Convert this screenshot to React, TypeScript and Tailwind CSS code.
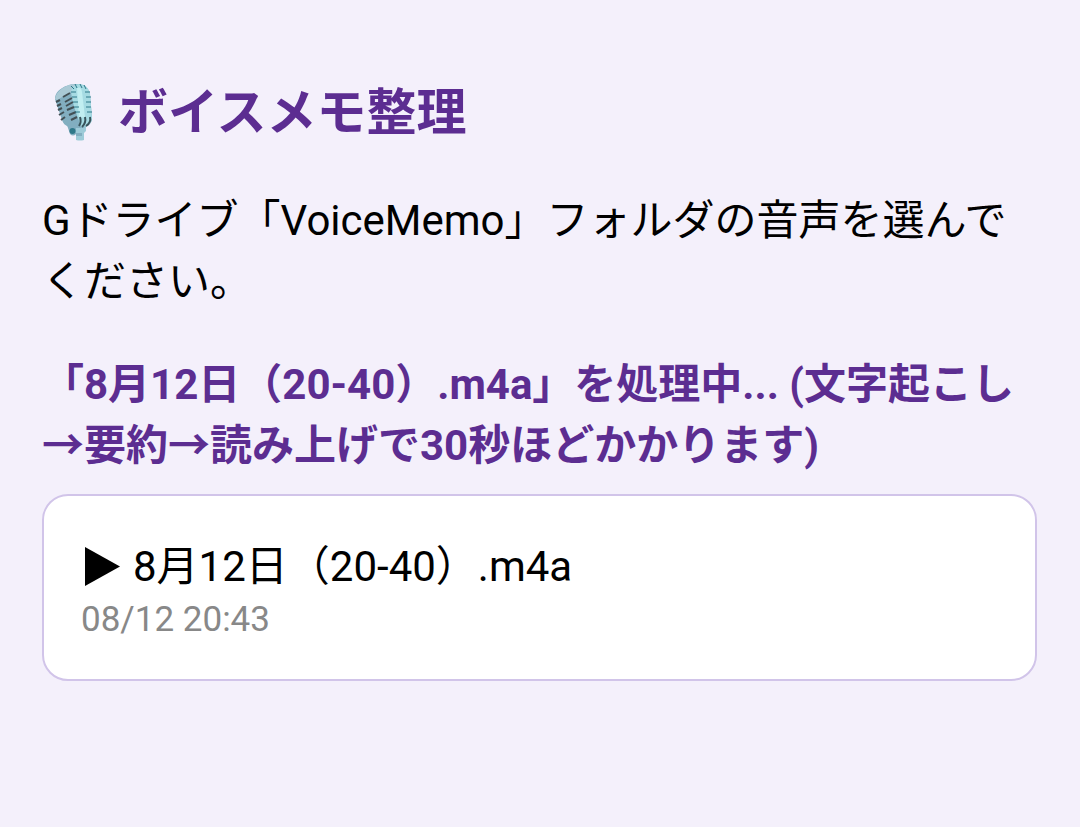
import React from 'react';

type Recording = {
  id: string;
  name: string;
  modified: string;
};

const RECORDINGS: Recording[] = [
  { id: 'rec-0812', name: '8月12日（20-40）.m4a', modified: '08/12 20:43' },
];

function MicIcon() {
  return (
    <svg viewBox="0 0 60 60" className="size-15 shrink-0" fill="none" aria-hidden="true">
      {/* stand */}
      <path d="M25 42 28 51q3 3 6 0l6-7z" fill="#82aec0" />
      <path d="M34 43h10v5l-2 2v7q-4 1-8 0z" fill="#9dcbd8" />
      <path d="M34 50h6v3h-6z" fill="#82aec0" />
      <circle cx="30.500" cy="48" r="3" fill="#2f7889" />
      {/* head */}
      <path d="M13 16C13 7 24 1 35 1c7 0 12 4 13 10l2 24c0 7-6 10-13 10-8 0-15-1-17-8z" fill="#82aec0" />
      <path d="M13 16C14 8 24 1 33 1l2 3-6 5-14 8z" fill="#a9c9d5" />
      <path d="M29 9c1-5 4-8 8-8 6 0 10 4 11 10l2 24c0 6-5 9-11 9-2-8-8-19-10-35z" fill="#a6dbe3" />
      <path d="M35 5q4-2 5 4l3 25-6 1z" fill="#c1eef1" />
      {/* grille */}
      <path
        d="m14 19 4-2m-3 6 4-2m-3 6 4-2m-3 7 5-3m-3 8 4-3M21 14l7-4m-5 9 7-4m-6 8 7-4m-6 8 7-3m-5 8 7-3m-5 8 6-3"
        stroke="#424f54"
        strokeWidth="2"
      />
      <path
        d="M29 9h5m-4 5h5m-4 5h5m-4 5h5m-4 5h5m5-20h5m-4 5h5m-5 5h5m-5 5h5m-4 5h5M29 3l3 3m1-5 2 4m3-4 2 4m2-3 2 4"
        stroke="#2f7889"
        strokeWidth="1"
      />
      <path d="M38 34c1 3 1 6-1 9m6-9c1 4 0 7-3 10m8-10c1 4-1 7-4 9" stroke="#39545c" strokeWidth="2" />
    </svg>
  );
}

function RecordingCard({ recording }: { recording: Recording }) {
  return (
    <button
      type="button"
      className="block w-full rounded-[26px] border-2 border-[#d1c4e9] bg-white px-[37px] pt-10 pb-[38px] text-left"
    >
      <span className="flex items-center text-[42px] leading-[62px] text-black">
        <svg viewBox="0 0 40 40" className="mr-3 size-10 shrink-0" aria-hidden="true">
          <path d="M4 0 39 19.500 4 39z" fill="currentColor" />
        </svg>
        {recording.name}
      </span>
      <span className="block text-[35px] leading-[43px] text-[#888888]">{recording.modified}</span>
    </button>
  );
}

export default function App() {
  return (
    <main className="min-h-screen bg-[#f4f0fb] pt-[76px] pr-[43px] pl-[42px] font-[Roboto,'Noto_Sans_CJK_JP',sans-serif] text-black">
      <h1 className="flex items-center gap-4 text-[50px] leading-[74px] font-bold text-[#5c2d91]">
        <MicIcon />
        ボイスメモ整理
      </h1>
      <p className="mt-10 text-[42px] leading-[61px]">
        Gドライブ「VoiceMemo」フォルダの音声を選んでください。
      </p>
      <p className="mt-[42px] text-[42px] leading-[61px] font-bold text-[#5c2d91]" role="status">
        「8月12日（20-40）.m4a」を処理中... (文字起こし→要約→読み上げで30秒ほどかかります)
      </p>
      <div className="mt-[18px] flex flex-col gap-5">
        {RECORDINGS.map((recording) => (
          <RecordingCard key={recording.id} recording={recording} />
        ))}
      </div>
    </main>
  );
}
